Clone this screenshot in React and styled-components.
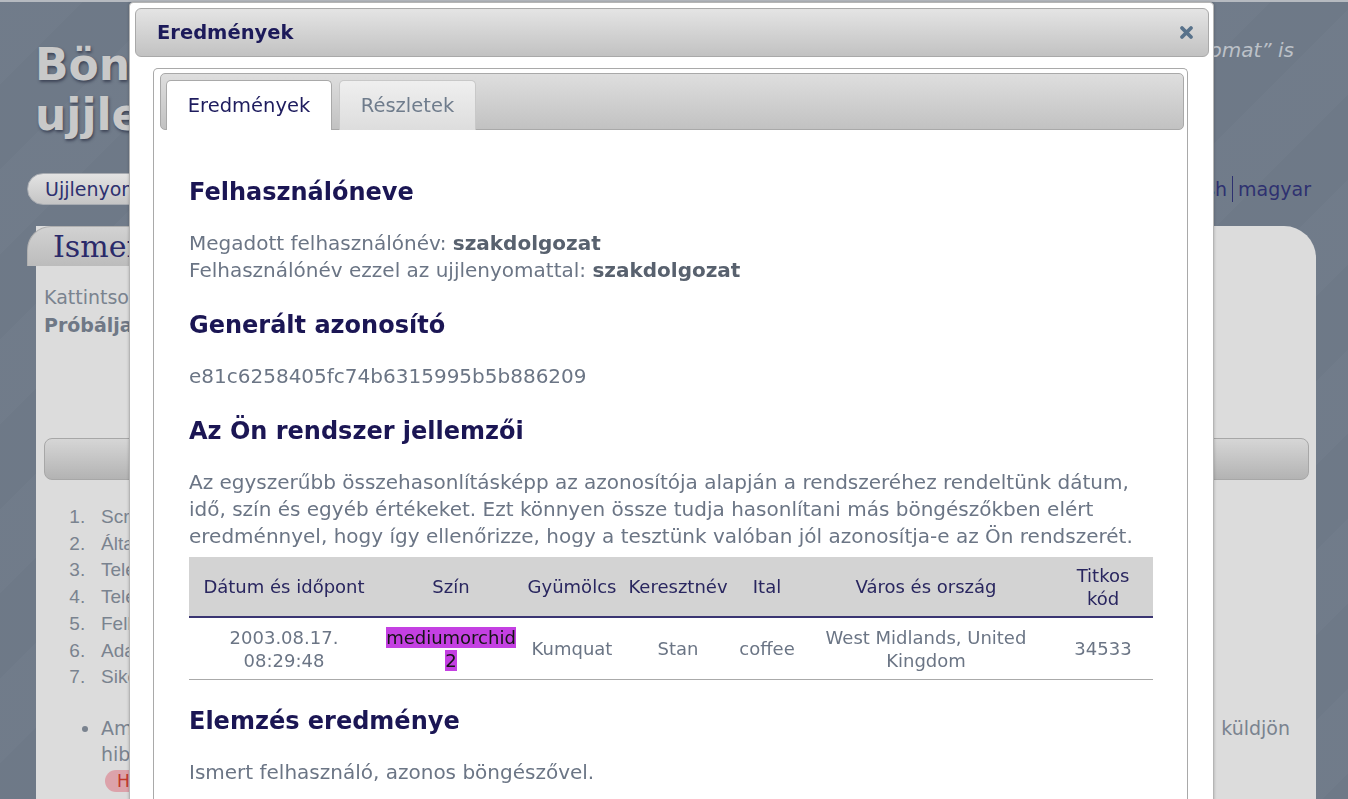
import React from 'react';
import styled, { createGlobalStyle } from 'styled-components';

const GlobalStyle = createGlobalStyle`
  html, body { margin: 0; padding: 0; height: 100%; }
  body {
    background-color: #6f7a89;
    background-image: repeating-linear-gradient(135deg, rgba(255,255,255,0.012) 0 60px, rgba(0,0,0,0.012) 60px 120px);
    font-family: "DejaVu Sans", Verdana, sans-serif;
    overflow: hidden;
    border-top: 2px solid #b6bac0;
  }
  * { box-sizing: border-box; }
`;

const Page = styled.div`
  height: 797px;
  overflow: hidden;
`;

const Header = styled.header`
  display: flex;
  justify-content: space-between;
  align-items: flex-start;
  padding: 36px 54px 0 35px;
`;

const SiteTitle = styled.h1`
  margin: 2px 0 0;
  font-size: 44px;
  line-height: 50px;
  font-weight: bold;
  color: #c9c9c9;
  text-shadow: 1px 2px 3px rgba(35, 40, 60, 0.65);
`;

const Tagline = styled.div`
  font-size: 20px;
  line-height: 24px;
  font-style: italic;
  color: #bcc1c8;
`;

const NavRow = styled.nav`
  display: flex;
  justify-content: space-between;
  align-items: center;
  margin-top: 33px;
  padding: 0 37px 0 27px;
  height: 32px;
`;

const NavPill = styled.div`
  height: 32px;
  padding: 0 17px;
  border-radius: 16px;
  border: 1px solid #a7abb1;
  background: linear-gradient(#e3e3e3, #c5c5c5);
  color: #2e3170;
  font-size: 19px;
  line-height: 30px;
`;

const Langs = styled.div`
  display: flex;
  align-items: center;
  gap: 5px;
  font-size: 19px;
  color: #2e3170;
`;

const LangSep = styled.span`
  width: 1px;
  height: 26px;
  background: #2e3170;
`;

const Panel = styled.section`
  margin: 26px 32px 0 36px;
  height: 600px;
  padding: 0 7px 0 8px;
  background: #dcdcdc;
  border-radius: 0 32px 0 0;
`;

const PanelTab = styled.div`
  margin: -5px 0 0 -17px;
  width: 420px;
  height: 40px;
  padding-left: 25px;
  border-radius: 24px 0 0 0;
  border-top: 1px solid #b0b0b0;
  border-left: 1px solid #b0b0b0;
  background: linear-gradient(#d2d2d2, #bcbcbc);
  font-family: "DejaVu Serif", "Liberation Serif", serif;
  font-size: 30px;
  line-height: 40px;
  color: #2a2a6a;
`;

const Intro = styled.p`
  margin: 17px 0 0;
  font-size: 19px;
  line-height: 28px;
  color: #7a838f;
  b { color: #6f7886; }
`;

const GrayBar = styled.div`
  margin-top: 99px;
  height: 42px;
  border: 1px solid #a7a7a7;
  border-radius: 8px;
  background: linear-gradient(#d6d6d6, #b3b3b3);
`;

const Steps = styled.ol`
  margin: 24px 0 0;
  padding-left: 57px;
  font-family: "Liberation Sans", Arial, sans-serif;
  font-size: 19px;
  line-height: 26.7px;
  color: #7a838f;
  li::marker {
    content: counter(list-item) ".   ";
  }
`;

const Notes = styled.ul`
  margin: 24px 0 0;
  padding-left: 57px;
  font-size: 19px;
  line-height: 26px;
  color: #7a838f;
`;

const NoteItem = styled.li`
  padding-right: 19px;
`;

const JustifiedLine = styled.span`
  display: block;
  text-align: justify;
  text-align-last: justify;
`;

const ReportPill = styled.span`
  display: inline-block;
  margin: 2px 0 0 4px;
  height: 22px;
  padding: 0 12px;
  border-radius: 11px;
  background: #dca2aa;
  color: #c0392b;
  font-size: 17px;
  line-height: 22px;
`;

const Modal = styled.div`
  position: fixed;
  top: 2px;
  left: 129px;
  width: 1085px;
  height: 830px;
  padding: 5px 4px 0 5px;
  background: #fff;
  border: 1px solid #b5b5b5;
  border-radius: 4px 4px 0 0;
  box-shadow: 0 0 3px rgba(0, 0, 0, 0.25);
`;

const TitleBar = styled.div`
  height: 49px;
  display: flex;
  align-items: center;
  justify-content: space-between;
  padding: 0 14px 0 21px;
  border: 1px solid #a9a9a9;
  border-radius: 6px;
  background: linear-gradient(#e4e4e4, #c2c2c2);
`;

const DialogTitle = styled.span`
  font-size: 19.5px;
  font-weight: bold;
  color: #1c1a5a;
`;

const CloseButton = styled.span`
  display: flex;
  width: 15px;
  height: 15px;
`;

const DialogBody = styled.div`
  margin: 11px 21px 0 18px;
  height: 800px;
  padding: 4px 3px 0 6px;
  border: 1px solid #a9a9a9;
  border-bottom: none;
  border-radius: 5px 5px 0 0;
`;

const TabBar = styled.div`
  height: 57px;
  display: flex;
  align-items: flex-end;
  gap: 7px;
  padding: 0 5px;
  border: 1px solid #a9a9a9;
  border-radius: 5px;
  background: linear-gradient(#dedede, #c2c2c2);
`;

const Tab = styled.div`
  width: ${p => p.$w}px;
  height: 50px;
  margin-bottom: -1px;
  border: 1px solid ${p => (p.$active ? '#a9a9a9' : '#c8c8c8')};
  border-bottom: none;
  border-radius: 5px 5px 0 0;
  background: ${p => (p.$active ? '#fff' : 'linear-gradient(#efefef, #dddddd)')};
  color: ${p => (p.$active ? '#1e1c5e' : '#6f7c8c')};
  font-size: 19.5px;
  line-height: 50px;
  text-align: center;
`;

const Content = styled.div`
  padding: 21px 31px 0 29px;
`;

const Heading = styled.h2`
  margin: 26px 0 23px;
  font-size: 24px;
  line-height: 30px;
  font-weight: bold;
  color: #1b1654;
`;

const Text = styled.p`
  margin: 0;
  font-size: 20px;
  line-height: 27px;
  color: #6b7585;
  strong { color: #58616e; }
`;

const Table = styled.table`
  width: 100%;
  margin-top: 7px;
  border-collapse: collapse;
  table-layout: fixed;
`;

const Th = styled.th`
  padding: 6.5px ${p => p.$px ?? 4}px;
  background: #d3d3d3;
  border-bottom: 2px solid #3a3572;
  color: #29265f;
  font-size: 18px;
  line-height: 23px;
  font-weight: normal;
  text-align: center;
  vertical-align: middle;
`;

const Td = styled.td`
  padding: 7.5px ${p => p.$px ?? 4}px;
  border-bottom: 1px solid #aaaaaa;
  color: #6b7585;
  font-size: 18px;
  line-height: 23px;
  text-align: center;
  vertical-align: middle;
  overflow-wrap: anywhere;
`;

const ColorSwatch = styled.span`
  background: #c440e2;
  color: #141414;
`;

const columns = [190, 144, 98, 114, 64, 254, 100];

export default function App() {
  return (
    <>
      <GlobalStyle />
      <Page>
        <Header>
          <SiteTitle>
            Böngésző
            <br />
            ujjlenyomat
          </SiteTitle>
          <Tagline>Mennyire egyedi a „böngésző ujjlenyomat” is</Tagline>
        </Header>
        <NavRow>
          <NavPill>Ujjlenyomat teszt</NavPill>
          <Langs>
            <span>English</span>
            <LangSep />
            <span>magyar</span>
          </Langs>
        </NavRow>
        <Panel>
          <PanelTab>Ismert felhasználó</PanelTab>
          <Intro>
            Kattintson a gombra a teszt indításához.
            <br />
            <b>Próbálja ki több böngészővel is!</b>
          </Intro>
          <GrayBar />
          <Steps>
            <li>Script futtatása</li>
            <li>Általános adatok gyűjtése</li>
            <li>Telepített betűtípusok</li>
            <li>Telepített bővítmények</li>
            <li>Felhasználói beállítások</li>
            <li>Adatok elküldése</li>
            <li>Sikeres azonosítás</li>
          </Steps>
          <Notes>
            <NoteItem>
              <JustifiedLine>
                Amennyiben úgy gondolja, hogy a teszt nem működik megfelelően, kérjük küldjön
              </JustifiedLine>
              hibajelentést az alábbi gombbal.
              <br />
              <ReportPill>Hibajelentés küldése</ReportPill>
            </NoteItem>
          </Notes>
        </Panel>
      </Page>

      <Modal>
        <TitleBar>
          <DialogTitle>Eredmények</DialogTitle>
          <CloseButton>
            <svg width="15" height="15" viewBox="0 0 15 15">
              <path d="M3 3 L12 12 M12 3 L3 12" stroke="#58728b" strokeWidth="3.8" strokeLinecap="round" />
            </svg>
          </CloseButton>
        </TitleBar>
        <DialogBody>
          <TabBar>
            <Tab $active $w={166}>Eredmények</Tab>
            <Tab $w={137}>Részletek</Tab>
          </TabBar>
          <Content>
            <Heading>Felhasználóneve</Heading>
            <Text>
              Megadott felhasználónév: <strong>szakdolgozat</strong>
              <br />
              Felhasználónév ezzel az ujjlenyomattal: <strong>szakdolgozat</strong>
            </Text>

            <Heading>Generált azonosító</Heading>
            <Text>e81c6258405fc74b6315995b5b886209</Text>

            <Heading>Az Ön rendszer jellemzői</Heading>
            <Text>
              Az egyszerűbb összehasonlításképp az azonosítója alapján a rendszeréhez rendeltünk dátum,
              idő, szín és egyéb értékeket. Ezt könnyen össze tudja hasonlítani más böngészőkben elért
              eredménnyel, hogy így ellenőrizze, hogy a tesztünk valóban jól azonosítja-e az Ön rendszerét.
            </Text>
            <Table>
              <colgroup>
                {columns.map((w, i) => (
                  <col key={i} style={{ width: w }} />
                ))}
              </colgroup>
              <thead>
                <tr>
                  <Th>Dátum és időpont</Th>
                  <Th>Szín</Th>
                  <Th>Gyümölcs</Th>
                  <Th>Keresztnév</Th>
                  <Th $px={2}>Ital</Th>
                  <Th>Város és ország</Th>
                  <Th $px={8}>Titkos kód</Th>
                </tr>
              </thead>
              <tbody>
                <tr>
                  <Td>2003.08.17. 08:29:48</Td>
                  <Td>
                    <ColorSwatch>mediumorchid2</ColorSwatch>
                  </Td>
                  <Td>Kumquat</Td>
                  <Td>Stan</Td>
                  <Td $px={2}>coffee</Td>
                  <Td>West Midlands, United Kingdom</Td>
                  <Td $px={8}>34533</Td>
                </tr>
              </tbody>
            </Table>

            <Heading>Elemzés eredménye</Heading>
            <Text>Ismert felhasználó, azonos böngészővel.</Text>
          </Content>
        </DialogBody>
      </Modal>
    </>
  );
}
